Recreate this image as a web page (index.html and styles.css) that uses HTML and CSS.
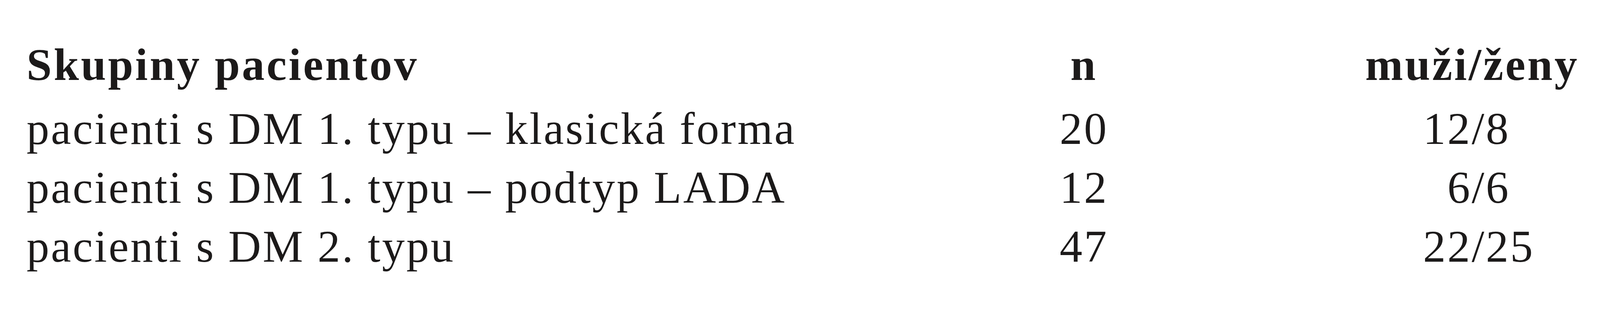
FILE: index.html
```html
<!DOCTYPE html>
<html lang="sk">
<head>
<meta charset="utf-8">
<title>Skupiny pacientov</title>
<link rel="stylesheet" href="styles.css">
</head>
<body>
<div class="table">
  <div class="cell head name">Skupiny pacientov</div>
  <div class="cell head num">n</div>
  <div class="cell head ratio-head">muži/ženy</div>

  <div class="cell name">pacienti s DM 1. typu – klasická forma</div>
  <div class="cell num">20</div>
  <div class="cell ratio">12/8</div>

  <div class="cell name">pacienti s DM 1. typu – podtyp LADA</div>
  <div class="cell num">12</div>
  <div class="cell ratio">&#8199;6/6</div>

  <div class="cell name">pacienti s DM 2. typu</div>
  <div class="cell num">47</div>
  <div class="cell ratio">22/25</div>
</div>
</body>
</html>
```

FILE: styles.css
```css
html, body {
  margin: 0;
  padding: 0;
  background: #ffffff;
}

body {
  width: 4156px;
  height: 800px;
  overflow: hidden;
  font-family: "Liberation Serif", "Times New Roman", serif;
  color: #1c1a1a;
}

.table {
  display: grid;
  grid-template-columns: 2532px 350px 1fr;
  padding: 91px 0 0 68px;
}

.cell {
  font-size: 116px;
  line-height: 151px;
  letter-spacing: 4.2px;
  white-space: nowrap;
}

.head {
  font-weight: bold;
  letter-spacing: 5px;
  margin-bottom: 13px;
}

.num {
  text-align: center;
}

.ratio-head {
  padding-left: 545px;
}

.ratio {
  padding-left: 693px;
}
```
